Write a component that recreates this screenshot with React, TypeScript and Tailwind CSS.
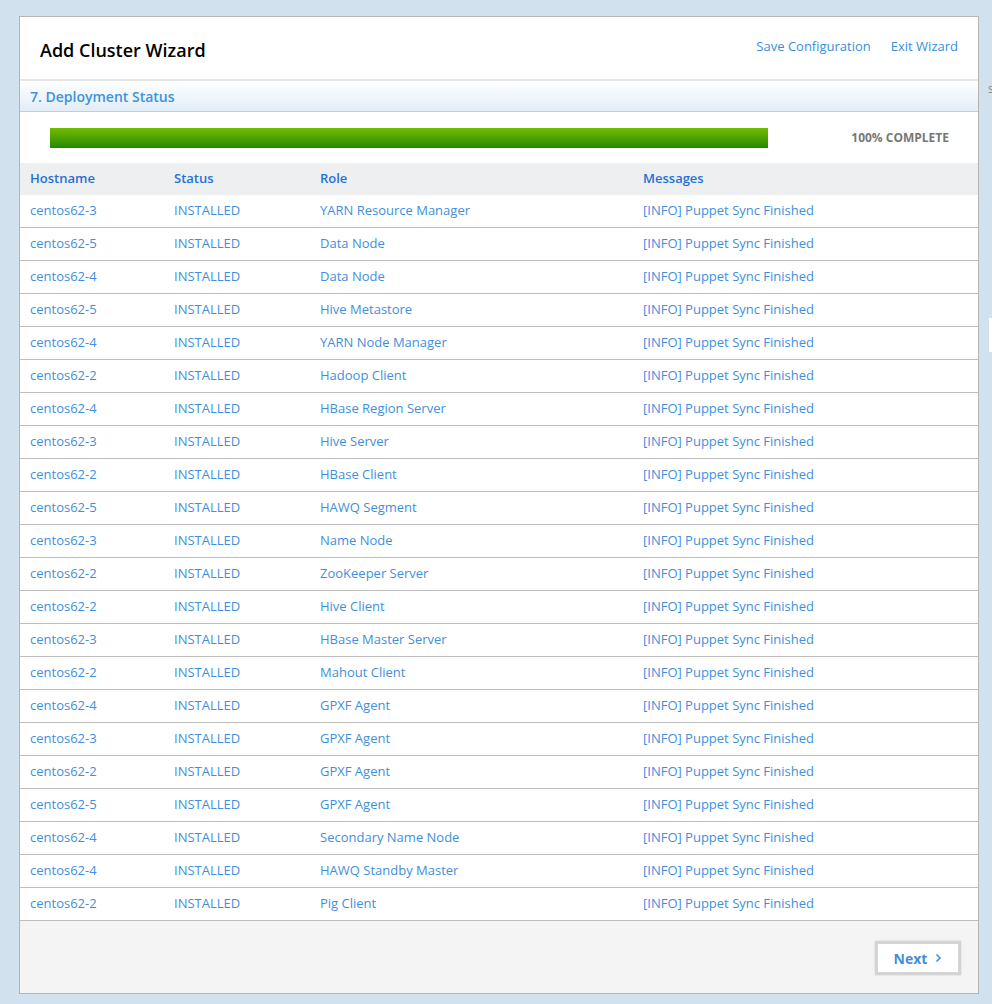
import React from "react";

const rows: [string, string][] = [
  ["centos62-3", "YARN Resource Manager"],
  ["centos62-5", "Data Node"],
  ["centos62-4", "Data Node"],
  ["centos62-5", "Hive Metastore"],
  ["centos62-4", "YARN Node Manager"],
  ["centos62-2", "Hadoop Client"],
  ["centos62-4", "HBase Region Server"],
  ["centos62-3", "Hive Server"],
  ["centos62-2", "HBase Client"],
  ["centos62-5", "HAWQ Segment"],
  ["centos62-3", "Name Node"],
  ["centos62-2", "ZooKeeper Server"],
  ["centos62-2", "Hive Client"],
  ["centos62-3", "HBase Master Server"],
  ["centos62-2", "Mahout Client"],
  ["centos62-4", "GPXF Agent"],
  ["centos62-3", "GPXF Agent"],
  ["centos62-2", "GPXF Agent"],
  ["centos62-5", "GPXF Agent"],
  ["centos62-4", "Secondary Name Node"],
  ["centos62-4", "HAWQ Standby Master"],
  ["centos62-2", "Pig Client"],
];

export default function App() {
  return (
    <div
      className="relative min-h-[1004px] w-[992px] bg-[#d1e1ee] pt-4 pl-[19px]"
      style={{ fontFamily: '"Open Sans", "Noto Sans", sans-serif' }}
    >
      <div className="absolute left-[988px] top-[80px] text-[12px] text-[#888]">s</div>
      <div className="absolute left-[989px] top-[318px] h-[34px] w-[3px] bg-white" />
      <div className="w-[960px] border border-[#b5b5b5] bg-white">
        <div className="flex h-[62px] items-center justify-between pl-5 pr-5 pt-[4px]">
          <h1 className="text-[18px] font-semibold text-black">Add Cluster Wizard</h1>
          <div className="-mt-[6px] flex gap-5 text-[13px] text-[#3a8ee0]">
            <span>Save Configuration</span>
            <span>Exit Wizard</span>
          </div>
        </div>
        <div className="flex h-[33px] items-center border-t-2 border-b border-t-[#e6e6e6] border-b-[#c3ced8] bg-gradient-to-b from-white to-[#e2edf8] pl-[10px] text-[14px] font-semibold text-[#3d93dc]">
          7. Deployment Status
        </div>
        <div className="flex h-[51px] items-center pl-[30px] pr-[29px]">
          <div className="h-[20px] w-[718px] bg-gradient-to-b from-[#72bc00] to-[#1c8a00]" />
          <div className="ml-auto text-[12px] font-bold text-[#777]">100% COMPLETE</div>
        </div>
        <div className="grid h-[32px] grid-cols-[144px_146px_323px_1fr] items-center bg-[#eeeff1] pl-[10px] text-[13px] font-semibold text-[#1f72d6]">
          <div>Hostname</div>
          <div>Status</div>
          <div>Role</div>
          <div>Messages</div>
        </div>
        {rows.map(([h, r], i) => (
          <div
            key={i}
            className="grid h-[33px] grid-cols-[144px_146px_323px_1fr] items-center border-b border-[#bdbdbd] pl-[10px] text-[13px] text-[#3f8fdd]"
          >
            <div>{h}</div>
            <div>INSTALLED</div>
            <div>{r}</div>
            <div>[INFO] Puppet Sync Finished</div>
          </div>
        ))}
        <div className="flex h-[72px] items-start justify-end bg-[#f4f4f4] pr-[17px] pt-[20px]">
          <div className="flex h-[34px] w-[86px] items-center justify-center gap-2 border-[3px] border-[#d4d4d4] bg-white text-[14px] font-bold text-[#3f8fdd] shadow-[0_0_2px_rgba(0,0,0,0.15)]">
            <span>Next</span>
            <svg width="7" height="10" viewBox="0 0 7 10" fill="none">
              <path d="M1.5 1.5L5 5L1.5 8.5" stroke="#3f8fdd" strokeWidth="1.6" />
            </svg>
          </div>
        </div>
      </div>
    </div>
  );
}
